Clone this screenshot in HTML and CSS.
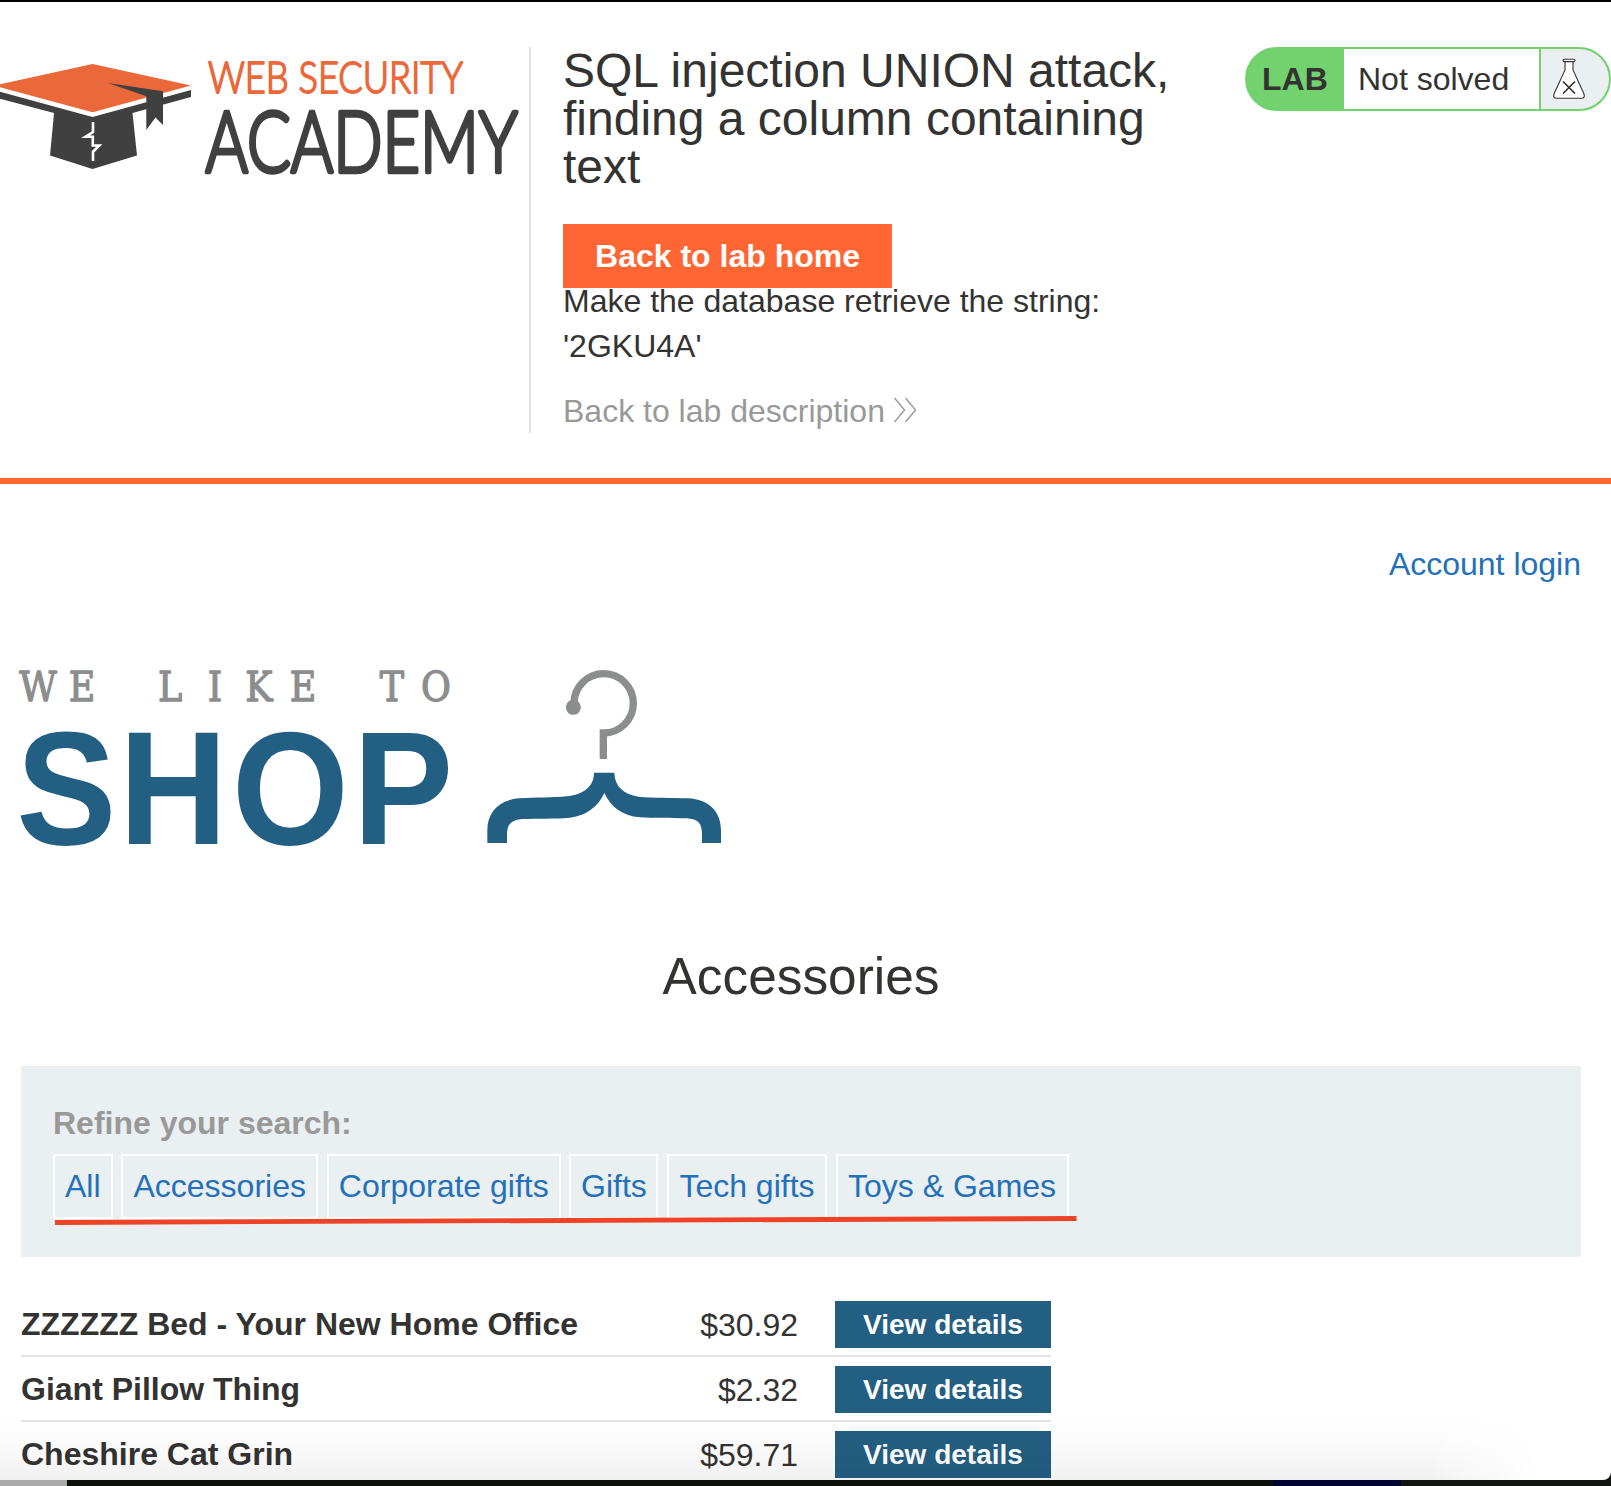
FILE: index.html
```html
<!DOCTYPE html>
<html lang="en">
<head>
<meta charset="utf-8">
<title>SQL injection UNION attack, finding a column containing text</title>
<link rel="stylesheet" href="styles.css">
</head>
<body>
<div class="window">
  <header class="lab-header">
    <svg class="academy-logo" width="529" height="140" viewBox="0 47 529 140" role="img" aria-label="Web Security Academy">
      <path fill="#eb683a" d="M-6 85.5L92.5 64L191 85.5L92.5 112.3Z"/>
      <path fill="#404040" d="M-6 90.2L92.5 117L191 90V97L132.5 113L137 155.5L92.5 169L50 155.5L54 113L-6 97.2Z"/>
      <path fill="#404040" d="M108 83L163 91.3V125L155.5 117.5L146.3 130V96.3Z"/>
      <path fill="none" stroke="#fff" stroke-width="2.6" d="M93 122V132L85.5 136.8H92.8V145.5H99.3L93 151.8V161"/>
      <text class="logo-web" x="208" y="93" textLength="255" lengthAdjust="spacingAndGlyphs">WEB SECURITY</text>
      <text class="logo-academy" x="205.500" y="172" textLength="312" lengthAdjust="spacingAndGlyphs">ACADEMY</text>
    </svg>
    <div class="lab-title">
      <h2>SQL injection UNION attack,<br>finding a column containing<br>text</h2>
      <a class="lab-home">Back to lab home</a>
      <p class="hint">Make the database retrieve the string:<br>'2GKU4A'</p>
      <a class="lab-description">Back to lab description
        <svg width="24" height="26" viewBox="0 0 24 26"><path d="M1.5 1L11.5 13L1.5 25M12.5 1L22.5 13L12.5 25"/></svg>
      </a>
    </div>
    <div class="lab-status">
      <span class="lab-tag">LAB</span>
      <span class="lab-state">Not solved</span>
      <span class="lab-flask">
        <svg width="34" height="42" viewBox="0 0 34 42"><path fill="#fff" d="M13 3.5V12L2 36Q.8 40.3 4.500 40.300H29.500Q33.200 40.300 32 36L21 12V3.500"/><rect x="11" y="1.200" width="12" height="2.400" rx="1.200" fill="#fff"/><path stroke-width="1.700" d="M11 23.500L23 35.500M23 23.500L11 35.500"/></svg>
      </span>
    </div>
  </header>
  <main class="shop">
    <nav class="account"><a>Account login</a></nav>
    <svg class="shop-logo" width="730" height="190" viewBox="0 660 730 190" role="img" aria-label="We like to shop">
      <g class="logo-like" transform="translate(0 701) scale(.88 1)"><text x="43.200 93.200 143 193.200 244.300 294.300 344.300 395 445.500 495.500" y="0">WE LIKE TO</text></g>
      <g class="logo-shop" transform="translate(0 843.500) scale(.93 1)"><text x="17.400 128 249.500 379.500" y="0">SHOP</text></g>
      <g transform="translate(460 640) scale(.33333)">
        <path fill="none" stroke="#8c8d8e" stroke-width="22" d="M342 190A89 89 0 1 1 430 279V357"/>
        <circle cx="340" cy="202" r="22.500" fill="#8c8d8e"/>
        <path fill="#235f83" d="M402 398H463C464 440 492 463 535 470C580 474 640 473 685 475C745 479 783 513 783 570V609H726V584C726 550 715 537 680 535C630 534 580 535 540 532C485 527 453 501 433 459C413 501 382 525 330 533C285 537 230 535 190 537C153 539 141 553 141 584V609H82V570C82 515 119 479 178 475C225 472 280 473 320 469C373 463 402 438 402 398Z"/>
      </g>
    </svg>
    <h1>Accessories</h1>
    <section class="filters">
      <div class="filters-label">Refine your search:</div>
      <div class="chips">
        <a class="w-all">All</a><a class="w-accessories">Accessories</a><a class="w-corporate">Corporate gifts</a><a class="w-gifts">Gifts</a><a class="w-tech">Tech gifts</a><a class="w-toys">Toys &amp; Games</a>
      </div>
      <svg class="underline" width="1022" height="12" viewBox="0 0 1022 12"><path d="M0 8.500Q500 7 1021.500 4.500"/></svg>
    </section>
    <div class="products">
      <div class="row"><span class="name">ZZZZZZ Bed - Your New Home Office</span><span class="price">$30.92</span><a>View details</a></div>
      <div class="row"><span class="name">Giant Pillow Thing</span><span class="price">$2.32</span><a>View details</a></div>
      <div class="row"><span class="name">Cheshire Cat Grin</span><span class="price">$59.71</span><a>View details</a></div>
    </div>
  </main>
  <div class="shade"></div>
</div>
</body>
</html>
```
FILE: styles.css
```css
* { box-sizing: border-box; }
body {
  margin: 0;
  background: linear-gradient(90deg, #aaa 0 67px, #0d110e 67px 1273px, #000435 1273px 1401px, #10150f 1401px);
  font-family: "Liberation Sans", Arial, sans-serif;
  font-size: 32px;
  line-height: 45px;
  color: #333332;
  height: 1486px;
  overflow: hidden;
}
h1, h2, p { margin: 0; font-weight: 400; }
a { white-space: nowrap; }
.window {
  position: relative;
  height: 1480px;
  overflow: hidden;
  background: #fff;
  border-top: 2px solid #000;
  border-bottom-right-radius: 8px;
}
.lab-header {
  display: flex;
  align-items: flex-start;
  height: 482px;
  padding-top: 45px;
  border-bottom: 6px solid #ff6633;
}
.academy-logo { flex: none; }
.logo-web { font: 300 42.5px Lato, sans-serif; fill: #eb683a; stroke: #eb683a; stroke-width: 1.8px; stroke-linejoin: round; }
.logo-academy { font: 300 84px Lato, sans-serif; fill: #404040; stroke: #404040; stroke-width: 4.5px; stroke-linejoin: round; }
.lab-title {
  flex: none;
  width: 716px;
  height: 386px;
  padding-left: 32px;
  border-left: 2px solid #e4e4e4;
}
.lab-title h2 { font-size: 48px; line-height: 48px; white-space: nowrap; }
.lab-home {
  display: block;
  width: 329px;
  height: 64px;
  margin-top: 33px;
  line-height: 64px;
  text-align: center;
  font-weight: 700;
  color: #fff;
  background: #ff6633;
}
.hint { margin-top: -9px; }
.lab-description { display: flex; align-items: center; gap: 8px; margin-top: 20px; color: #999; }
.lab-description svg { margin-top: -3px; fill: none; stroke: #999; stroke-width: 1.4; }
.lab-status {
  display: flex;
  flex: none;
  width: 366px;
  height: 64px;
  line-height: 61px;
  border: 2px solid #72d26e;
  border-radius: 32px;
  background: #72d26e;
  overflow: hidden;
}
.lab-tag { width: 97px; padding-left: 15px; font-weight: 700; }
.lab-state { width: 197px; padding-left: 14px; border-right: 2px solid #72d26e; background: #fff; white-space: nowrap; }
.lab-flask { flex: 1; display: flex; align-items: center; padding-left: 11px; background: #eaeff2; }
.lab-flask svg { fill: none; stroke: #333; stroke-width: 1.1; }
.shop { padding: 0 30px 0 21px; }
.account { display: flex; justify-content: flex-end; padding-top: 58px; color: #2370bb; }
.shop-logo { display: block; margin: 73px 0 0 -21px; }
.logo-like { font: 41.5px "DejaVu Serif", serif; fill: #8c8d8e; stroke: #8c8d8e; stroke-width: 1.3px; stroke-linejoin: round; text-anchor: middle; }
.logo-shop { font: 700 161.5px "Liberation Sans", Arial, sans-serif; fill: #235f83; }
h1 { margin-top: 98px; font-size: 51.4px; line-height: 56px; text-align: center; }
.filters {
  position: relative;
  height: 191px;
  margin-top: 62px;
  padding: 35px 32px;
  background: #eaeff2;
}
.filters-label { font-weight: 700; color: #999; }
.chips { display: flex; gap: 8.6px; margin-top: 8px; }
.chips a {
  flex: none;
  height: 65px;
  border: 2px solid #fff;
  line-height: 61px;
  text-align: center;
  color: #2370bb;
}
.w-all { width: 59.600px; }
.w-accessories { width: 197px; }
.w-corporate { width: 234px; }
.w-gifts { width: 89px; }
.w-tech { width: 160px; }
.w-toys { width: 233px; }
.underline { position: absolute; left: 34px; top: 148px; fill: none; stroke: #ee4326; stroke-width: 4.800; }
.products { width: 1030px; margin-top: 35px; }
.row {
  display: grid;
  grid-template-columns: 1fr 120px 216px;
  column-gap: 37px;
  align-items: center;
  height: 65px;
  padding-top: 1px;
  border-bottom: 2px solid #e4e4e4;
}
.name { font-weight: 700; white-space: nowrap; }
.price { padding-top: 2px; text-align: right; }
.row a {
  height: 47px;
  line-height: 48px;
  font-size: 28px;
  font-weight: 700;
  text-align: center;
  color: #fff;
  background: #235f83;
}
.shade {
  position: absolute;
  left: 0;
  bottom: 0;
  width: 1540px;
  height: 65px;
  background: linear-gradient(rgba(0, 0, 0, 0), rgba(0, 0, 0, .02) 50%, rgba(0, 0, 0, .055));
  -webkit-mask-image: linear-gradient(90deg, #000 1430px, transparent);
  mask-image: linear-gradient(90deg, #000 1430px, transparent);
}
```
